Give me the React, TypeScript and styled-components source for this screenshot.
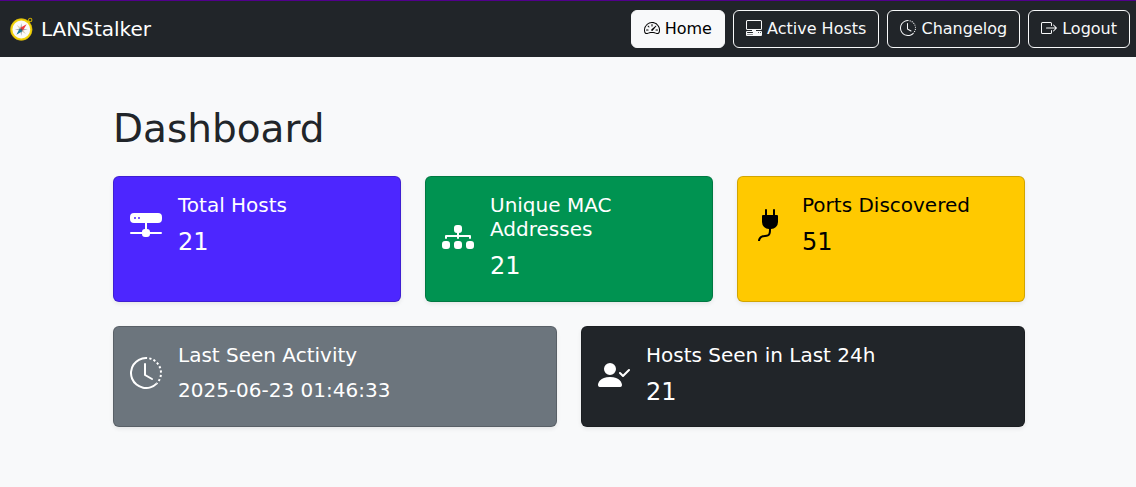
import React from "react";
import styled, { createGlobalStyle } from "styled-components";
import type { IconType } from "react-icons";
import {
  BsBoxArrowRight,
  BsClockHistory,
  BsDiagram3Fill,
  BsHddNetworkFill,
  BsPcDisplayHorizontal,
  BsPersonCheckFill,
  BsPlugFill,
  BsSpeedometer2,
} from "react-icons/bs";

const GlobalStyle = createGlobalStyle`
  *, *::before, *::after { box-sizing: border-box; }
  body {
    margin: 0;
    background: #f8f9fa;
    color: #212529;
    font-family: "DejaVu Sans", sans-serif;
    font-size: 16px;
    line-height: 24px;
  }
`;

const Navbar = styled.nav`
  display: flex;
  align-items: center;
  justify-content: space-between;
  flex-wrap: wrap;
  gap: 8px;
  padding: 9px 6px 9px 10px;
  border-top: 1px solid #52008c;
  background: #212529;
`;

const Brand = styled.a`
  display: flex;
  align-items: center;
  gap: 7px;
  color: #fff;
  font-size: 20px;
  line-height: 30px;
  text-decoration: none;
`;

const NavLinks = styled.div`
  display: flex;
  flex-wrap: wrap;
  gap: 8px;
`;

const NavButton = styled.a<{ $active?: boolean }>`
  padding: 6px 12px;
  border: 1px solid #f8f9fa;
  border-radius: 6px;
  background: ${(p) => (p.$active ? "#f8f9fa" : "transparent")};
  color: ${(p) => (p.$active ? "#000" : "#f8f9fa")};
  text-decoration: none;
  white-space: nowrap;
  & > svg { vertical-align: -2px; }
`;

const Main = styled.main`
  max-width: 960px;
  margin: 0 auto;
  padding: 48px 23px 24px 25px;
`;

const Title = styled.h1`
  margin: 0 0 24px;
  font-size: 39px;
  font-weight: 400;
  line-height: 47px;
`;

const Cards = styled.div`
  display: grid;
  grid-template-columns: repeat(6, 1fr);
  grid-template-rows: minmax(126px, auto);
  gap: 24px;
`;

const Card = styled.section<{ $bg: string; $color: string; $span: number }>`
  grid-column: span ${(p) => p.$span};
  padding: 16px;
  border: 1px solid rgba(0, 0, 0, 0.176);
  border-radius: 6px;
  background: ${(p) => p.$bg};
  background-clip: border-box;
  color: ${(p) => p.$color};
  box-shadow: 0 2px 4px rgba(0, 0, 0, 0.075);
`;

const CardBody = styled.div`
  display: flex;
  align-items: center;
  gap: 16px;
  & > svg {
    flex: none;
    margin-bottom: 3px;
  }
`;

const CardTitle = styled.h2`
  margin: 0 0 8px;
  font-size: 20px;
  font-weight: 400;
  line-height: 24px;
`;

const CardValue = styled.p<{ $small?: boolean }>`
  margin: 0;
  font-size: ${(p) => (p.$small ? 20 : 24)}px;
  line-height: ${(p) => (p.$small ? 30 : 35)}px;
`;

const Compass = () => (
  <svg width="24" height="24" viewBox="0 0 24 24" aria-hidden="true">
    <circle cx="20.2" cy="3" r="1.7" fill="none" stroke="#c4a600" strokeWidth="1.1" />
    <path d="M17.5 6.3 19.4 4.3" stroke="#e0bd00" strokeWidth="2" />
    <circle cx="11.3" cy="12.5" r="9.9" fill="#fafafa" stroke="#f2d40c" strokeWidth="2" />
    <circle cx="11.3" cy="12.5" r="10.8" fill="none" stroke="#c9a808" strokeWidth="0.5" />
    <path
      d="M11.3 6 12.3 11.5 17.8 12.5 12.3 13.5 11.3 19 10.3 13.5 4.8 12.5 10.3 11.5Z"
      fill="#a9aeb2"
    />
    <path d="m6.8 8 4.8 3 4.3 6-5.3-3.2Z" fill="#dccbb0" />
    <path d="M16.6 7.2 10 11 12.8 13.8Z" fill="#ef3a3a" />
    <path d="M6.4 17.8 9.8 11.2 12.8 14Z" fill="#157a98" />
    <circle cx="11.3" cy="12.5" r="1" fill="#455a64" />
  </svg>
);

const links: { label: string; icon: IconType; active?: boolean }[] = [
  { label: "Home", icon: BsSpeedometer2, active: true },
  { label: "Active Hosts", icon: BsPcDisplayHorizontal },
  { label: "Changelog", icon: BsClockHistory },
  { label: "Logout", icon: BsBoxArrowRight },
];

type Stat = {
  title: string;
  value: string;
  icon: IconType;
  bg: string;
  color: string;
  span: number;
  small?: boolean;
};

const stats: Stat[] = [
  { title: "Total Hosts", value: "21", icon: BsHddNetworkFill, bg: "#4d26ff", color: "#fff", span: 2 },
  { title: "Unique MAC Addresses", value: "21", icon: BsDiagram3Fill, bg: "#009351", color: "#fff", span: 2 },
  { title: "Ports Discovered", value: "51", icon: BsPlugFill, bg: "#ffc900", color: "#000", span: 2 },
  { title: "Last Seen Activity", value: "2025-06-23 01:46:33", icon: BsClockHistory, bg: "#6c757d", color: "#fff", span: 3, small: true },
  { title: "Hosts Seen in Last 24h", value: "21", icon: BsPersonCheckFill, bg: "#212529", color: "#fff", span: 3 },
];

export default function App() {
  return (
    <>
      <GlobalStyle />
      <Navbar>
        <Brand href="#">
          <Compass />
          LANStalker
        </Brand>
        <NavLinks>
          {links.map(({ label, icon: Icon, active }) => (
            <NavButton key={label} href="#" $active={active}>
              <Icon size={16} aria-hidden="true" /> {label}
            </NavButton>
          ))}
        </NavLinks>
      </Navbar>
      <Main>
        <Title>Dashboard</Title>
        <Cards>
          {stats.map(({ title, value, icon: Icon, bg, color, span, small }) => (
            <Card key={title} $bg={bg} $color={color} $span={span}>
              <CardBody>
                <Icon size={32} aria-hidden="true" />
                <div>
                  <CardTitle>{title}</CardTitle>
                  <CardValue $small={small}>{value}</CardValue>
                </div>
              </CardBody>
            </Card>
          ))}
        </Cards>
      </Main>
    </>
  );
}
